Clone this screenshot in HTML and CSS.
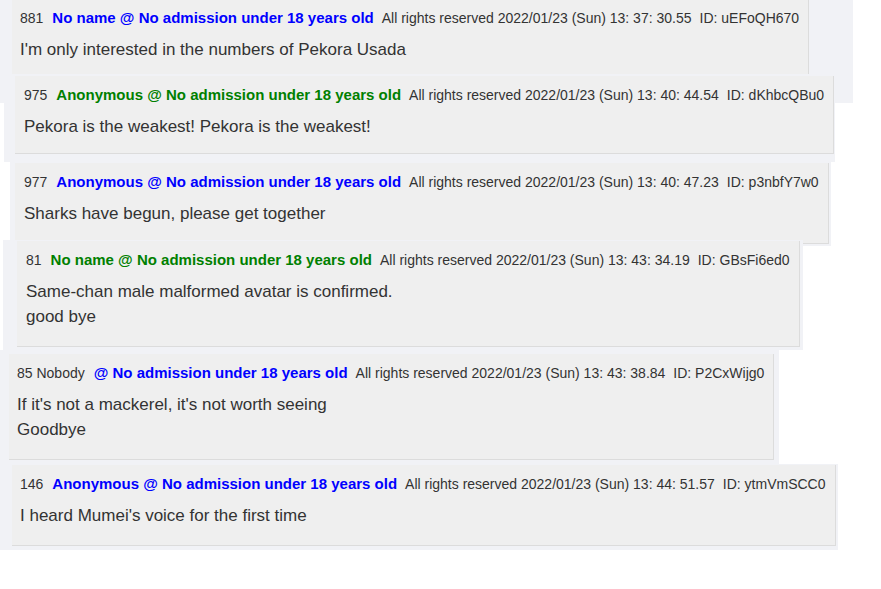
FILE: index.html
```html
<!DOCTYPE html>
<html lang="en">
  <head>
    <meta charset="UTF-8" />
    <meta name="viewport" content="width=device-width, initial-scale=1.0" />
    <title>Thread clips</title>
    <link rel="stylesheet" href="styles.css">
  </head>
  <body>
    <div class="shot shot-1">
      <div class="post">
        <div class="post-head">
          <span class="post-no">881</span>
          <span class="post-name blue">No name @ No admission under 18 years old</span>
          <span class="post-date">All rights reserved 2022/01/23 (Sun) 13: 37: 30.55</span>
          <span class="post-id">ID: uEFoQH670</span>
        </div>
        <div class="post-body">I'm only interested in the numbers of Pekora Usada</div>
      </div>
    </div>

    <div class="shot shot-2">
      <div class="post">
        <div class="post-head">
          <span class="post-no">975</span>
          <span class="post-name green">Anonymous @ No admission under 18 years old</span>
          <span class="post-date">All rights reserved 2022/01/23 (Sun) 13: 40: 44.54</span>
          <span class="post-id">ID: dKhbcQBu0</span>
        </div>
        <div class="post-body">Pekora is the weakest! Pekora is the weakest!</div>
      </div>
    </div>

    <div class="shot shot-3">
      <div class="post">
        <div class="post-head">
          <span class="post-no">977</span>
          <span class="post-name blue">Anonymous @ No admission under 18 years old</span>
          <span class="post-date">All rights reserved 2022/01/23 (Sun) 13: 40: 47.23</span>
          <span class="post-id">ID: p3nbfY7w0</span>
        </div>
        <div class="post-body">Sharks have begun, please get together</div>
      </div>
    </div>

    <div class="shot shot-4">
      <div class="post">
        <div class="post-head">
          <span class="post-no">81</span>
          <span class="post-name green">No name @ No admission under 18 years old</span>
          <span class="post-date">All rights reserved 2022/01/23 (Sun) 13: 43: 34.19</span>
          <span class="post-id">ID: GBsFi6ed0</span>
        </div>
        <div class="post-body">Same-chan male malformed avatar is confirmed.<br>good bye</div>
      </div>
    </div>

    <div class="shot shot-5">
      <div class="post">
        <div class="post-head">
          <span class="post-no">85 Nobody</span>
          <span class="post-name blue">@ No admission under 18 years old</span>
          <span class="post-date">All rights reserved 2022/01/23 (Sun) 13: 43: 38.84</span>
          <span class="post-id">ID: P2CxWijg0</span>
        </div>
        <div class="post-body">If it's not a mackerel, it's not worth seeing<br>Goodbye</div>
      </div>
    </div>

    <div class="shot shot-6">
      <div class="post">
        <div class="post-head">
          <span class="post-no">146</span>
          <span class="post-name blue">Anonymous @ No admission under 18 years old</span>
          <span class="post-date">All rights reserved 2022/01/23 (Sun) 13: 44: 51.57</span>
          <span class="post-id">ID: ytmVmSCC0</span>
        </div>
        <div class="post-body">I heard Mumei's voice for the first time</div>
      </div>
    </div>
  </body>
</html>
```

FILE: styles.css
```css
body {
  margin: 0;
  background-color: #fff;
  font-family: "Liberation Sans", Arial, sans-serif;
  color: #333;
}

/* each clipped screenshot strip */
.shot {
  background-color: #f1f2f6;
  box-sizing: border-box;
}
.shot-1 {
  width: 853px;
  height: 103px;
  padding-left: 12px;
}
.shot-2 {
  width: 831px;
  margin-top: -27px;
  margin-left: 4px;
  padding: 0 0 8px 11px;
}
.shot-3 {
  width: 821px;
  margin-left: 10px;
  padding: 1px 0 2px 5px;
}
.shot-4 {
  width: 800px;
  margin-top: -6px;
  margin-left: 3px;
  padding: 1px 0 3px 14px;
}
.shot-5 {
  width: 779px;
  padding: 4px 0 4px 9px;
}
.shot-6 {
  width: 838px;
  padding: 1px 0 4px 12px;
}

/* post box */
.post {
  box-sizing: border-box;
  background-color: #efefef;
  border-right: 1px solid #dcdcdc;
  border-bottom: 1px solid #dcdcdc;
  padding: 9px 8px 17px;
}
.shot-1 .post {
  width: 797px;
  padding-top: 8px;
  padding-bottom: 12px;
  border-bottom: none;
}
.shot-2 .post {
  width: 819px;
  padding-left: 9px;
  padding-bottom: 14px;
}
.shot-3 .post {
  width: 814px;
  padding-left: 9px;
}
.shot-4 .post {
  width: 783px;
  padding-left: 9px;
}
.shot-5 .post {
  width: 765px;
}
.shot-6 .post {
  width: 824px;
}

.post-head {
  display: flex;
  align-items: baseline;
  gap: 8px;
  font-size: 14px;
  line-height: 20px;
  white-space: nowrap;
}
.post-no {
  margin-right: 1px;
}
.post-name {
  font-size: 15px;
  font-weight: bold;
}
.blue {
  color: #0000ff;
}
.green {
  color: #008000;
}
.post-body {
  margin-top: 9px;
  font-size: 17px;
  line-height: 25px;
}
```
